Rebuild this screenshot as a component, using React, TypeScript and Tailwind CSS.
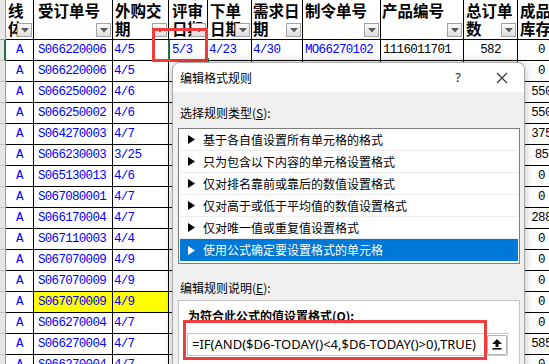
import React from "react";

const MONO = '"Liberation Mono", "DejaVu Sans Mono", monospace';
const CJK = '"Noto Sans CJK SC", "Noto Sans", sans-serif';
const UI = '"Noto Sans", "Noto Sans CJK SC", sans-serif';

const W = [
  "w-[28px]",
  "w-[79px]",
  "w-[56px]",
  "w-[39px]",
  "w-[44px]",
  "w-[51px]",
  "w-[78px]",
  "w-[83px]",
  "w-[54px]",
  "w-[48px]",
];

type Row = { o: string; d: string; v: string; hl?: boolean };

const rows: Row[] = [
  { o: "S066220006", d: "4/5", v: "0" },
  { o: "S066220006", d: "4/5", v: "0" },
  { o: "S066250002", d: "4/6", v: "550" },
  { o: "S066250002", d: "4/6", v: "550" },
  { o: "S064270003", d: "4/7", v: "375" },
  { o: "S066230003", d: "3/25", v: "85" },
  { o: "S065130013", d: "4/6", v: "0" },
  { o: "S067080001", d: "4/7", v: "0" },
  { o: "S066170004", d: "4/7", v: "288" },
  { o: "S067110003", d: "4/4", v: "0" },
  { o: "S067070009", d: "4/9", v: "0" },
  { o: "S067070009", d: "4/9", v: "0" },
  { o: "S067070009", d: "4/9", v: "0", hl: true },
  { o: "S066270004", d: "4/7", v: "0" },
  { o: "S066270004", d: "4/7", v: "585" },
  { o: "S066270004", d: "4/7", v: "0" },
];

const headers: { l1: string; l2?: string; pl: string }[] = [
  { l1: "线", l2: "体", pl: "pl-[2px]" },
  { l1: "受订单号", pl: "pl-[4px]" },
  { l1: "外购交", l2: "期", pl: "pl-[2px]" },
  { l1: "评审", l2: "日期", pl: "pl-[3px]" },
  { l1: "下单", l2: "日期", pl: "pl-[2px]" },
  { l1: "需求日", l2: "期", pl: "pl-[1px]" },
  { l1: "制令单号", pl: "pl-[2px]" },
  { l1: "产品编号", pl: "pl-[1px]" },
  { l1: "总订单", l2: "数", pl: "pl-[2px]" },
  { l1: "成品", l2: "库存", pl: "pl-[2px]" },
];

function FilterBtn() {
  return (
    <div className="absolute right-[1px] bottom-[2px] w-[15px] h-[14px] border border-[#a3a3a3] bg-gradient-to-b from-[#fbfbfb] to-[#dedede] flex items-center justify-center">
      <svg width="8" height="5" viewBox="0 0 8 5">
        <polygon points="0,0 8,0 4,4.5" fill="#5a5a5a" />
      </svg>
    </div>
  );
}

function RowHead({ active }: { active?: boolean }) {
  return (
    <div
      className={
        "w-[6px] shrink-0 bg-[#e6e6e6] border-b border-[#c2c2c2] " +
        (active ? "border-r-2 border-r-[#217346]" : "border-r border-r-[#9e9e9e]")
      }
    />
  );
}

function Tri({ color }: { color: string }) {
  return (
    <svg width="7" height="9" viewBox="0 0 7 9" className="shrink-0">
      <polygon points="0,0 7,4.5 0,9" fill={color} />
    </svg>
  );
}

const ruleTypes = [
  "基于各自值设置所有单元格的格式",
  "只为包含以下内容的单元格设置格式",
  "仅对排名靠前或靠后的数值设置格式",
  "仅对高于或低于平均值的数值设置格式",
  "仅对唯一值或重复值设置格式",
  "使用公式确定要设置格式的单元格",
];

const cellBase =
  " shrink-0 border-r border-b border-black flex items-center text-[12.5px] tracking-[-0.7px] whitespace-nowrap ";

export default function App() {
  return (
    <div className="relative w-[549px] h-[364px] overflow-hidden bg-white">
      {/* Sheet */}
      <div className="flex flex-col w-[566px]">
        {/* header */}
        <div className="flex h-[40px]">
          <div className="w-[6px] shrink-0 bg-[#e6e6e6] border-r border-b border-[#9e9e9e]" />
          {headers.map((h, i) => (
            <div
              key={i}
              className={
                W[i] +
                " shrink-0 relative border-r border-b border-black overflow-hidden whitespace-nowrap text-[15.5px] leading-[18px] font-bold text-black pt-[1px] " +
                h.pl
              }
              style={{ fontFamily: CJK }}
            >
              <div>{h.l1}</div>
              {h.l2 && <div>{h.l2}</div>}
              <FilterBtn />
            </div>
          ))}
        </div>
        {rows.map((r, ri) => {
          const first = ri === 0;
          return (
            <div key={ri} className="flex h-[21px]" style={{ fontFamily: MONO }}>
              <RowHead active={first} />
              <div className={W[0] + cellBase + "justify-center text-[#0000ff]"}>A</div>
              <div className={W[1] + cellBase + "pl-[4px] text-[#0000ff] " + (r.hl ? "bg-[#ffff00]" : "")}>{r.o}</div>
              <div className={W[2] + cellBase + "pl-[1px] text-[#0000ff] " + (r.hl ? "bg-[#ffff00]" : "")}>{r.d}</div>
              <div className={W[3] + cellBase + "relative pl-[3px] text-[#0000ff]"}>
                {first ? "5/3" : ""}
                {first && (
                  <>
                    <div className="absolute -left-[1px] top-0 bottom-0 w-[2px] bg-[#217346]" />
                    <div className="absolute -right-[2px] -bottom-[2px] w-[4px] h-[4px] bg-[#217346]" />
                  </>
                )}
              </div>
              <div className={W[4] + cellBase + "pl-[1px] text-[#0000ff]"}>{first ? "4/23" : ""}</div>
              <div className={W[5] + cellBase + "pl-[1px] text-[#0000ff]"}>{first ? "4/30" : ""}</div>
              <div className={W[6] + cellBase + "pl-[2px] text-[#0000ff]"}>{first ? "MO66270102" : ""}</div>
              <div className={W[7] + cellBase + "pl-[2px] text-black"}>{first ? "1116011701" : ""}</div>
              <div className={W[8] + cellBase + "justify-center text-black"}>{first ? "582" : ""}</div>
              <div className={W[9] + cellBase + "justify-center text-black"}>{r.v}</div>
            </div>
          );
        })}
      </div>

      {/* red highlight in sheet */}
      <div className="absolute left-[152px] top-[28px] w-[56px] h-[34px] border-[3px] border-[#f23c3c]" />

      {/* Dialog */}
      <div
        className="absolute left-[172px] top-[62px] w-[353px] h-[320px] rounded-t-[8px] border border-[#a8a8a8] bg-[#f0f0f0] shadow-[0_0_8px_rgba(0,0,0,0.28)] overflow-hidden text-black"
        style={{ fontFamily: CJK }}
      >
        <div className="h-[29px] bg-white flex items-center pl-[7px] text-[12px]">
          <span className="flex-1">编辑格式规则</span>
          <div className="flex items-center gap-[35px] pr-[16px]">
            <span className="text-[13px] text-[#222]" style={{ fontFamily: UI }}>
              ?
            </span>
            <svg width="12" height="12" viewBox="0 0 12 12">
              <path d="M1 1 L11 11 M11 1 L1 11" stroke="#333" strokeWidth="1.1" />
            </svg>
          </div>
        </div>

        <div className="pl-[7px] mt-[13px] text-[12px] leading-[16px]">
          选择规则类型(<span className="underline">S</span>):
        </div>

        <div className="ml-[5px] mt-[7px] w-[342px] h-[136px] border border-[#7d7d7d] bg-white px-[1px] pb-[2px]">
          {ruleTypes.map((t, i) => {
            const sel = i === ruleTypes.length - 1;
            return (
              <div
                key={i}
                className={
                  "h-[22px] flex items-center pl-[8px] gap-[8px] text-[12px] " +
                  (sel ? "bg-[#0078d7] text-white" : "border-b border-[#ececec] text-black")
                }
              >
                <Tri color={sel ? "#ffffff" : "#000000"} />
                <span>{t}</span>
              </div>
            );
          })}
        </div>

        <div className="pl-[7px] mt-[16px] text-[12px] leading-[16px]">
          编辑规则说明(<span className="underline">E</span>):
        </div>

        <div className="ml-[5px] mt-[4px] w-[342px] h-[120px] border border-[#c4c4c4] bg-white pt-[7px]">
          <div className="pl-[9px] text-[12px] leading-[16px] font-bold">
            为符合此公式的值设置格式(<span className="underline">O</span>):
          </div>
          <div className="ml-[8px] mt-[9px] w-[321px] h-[23px] border border-[#c8c8c8] bg-white flex items-center">
            <span className="pl-[4px] flex-1 text-[13px] whitespace-nowrap" style={{ fontFamily: UI }}>
              =IF(AND($D6-TODAY()&lt;4,$D6-TODAY()&gt;0),TRUE)
            </span>
            <div className="w-[20px] h-[20px] border border-[#b4b4b4] rounded-[2px] bg-[#fdfdfd] flex items-center justify-center">
              <svg width="10" height="11" viewBox="0 0 10 11">
                <polygon points="5,0 10,5 6.5,5 6.5,8 3.5,8 3.5,5 0,5" fill="#111" />
                <rect x="0.5" y="9" width="9" height="1.6" fill="#111" />
              </svg>
            </div>
          </div>
        </div>

        {/* red highlight around formula */}
        <div className="absolute left-[10px] top-[257px] w-[304px] h-[40px] border-[3px] border-[#f23c3c]" />
      </div>
    </div>
  );
}
